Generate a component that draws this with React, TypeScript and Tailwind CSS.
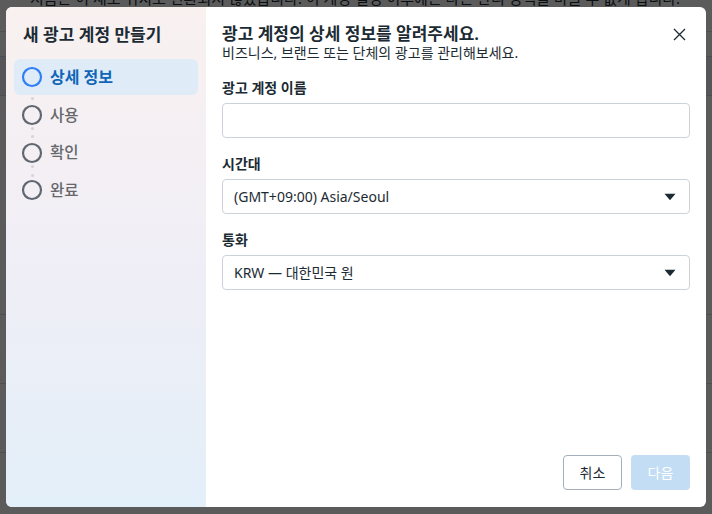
import React from 'react';

const font = { fontFamily: '"Noto Sans", "Noto Sans CJK KR", sans-serif' };

const steps = ['상세 정보', '사용', '확인', '완료'];

const Circle: React.FC<{ active?: boolean }> = ({ active }) => (
    <svg width="22" height="22" viewBox="0 0 22 22" className="shrink-0">
        <circle cx="11" cy="11" r="9" fill="none" stroke={active ? '#2e7ff7' : '#606770'} strokeWidth="2.2" />
    </svg>
);

const Caret = () => (
    <svg width="12" height="8" viewBox="0 0 12 8">
        <path d="M0.5 0.8 L11.5 0.8 L6 7.2 Z" fill="#1c2b33" />
    </svg>
);

const App: React.FC = () => {
    return (
        <div className="relative w-[712px] h-[514px] overflow-hidden bg-white" style={font}>
            {/* page behind the dialog */}
            <div className="flex flex-col">
                <div className="mt-[-10px] pl-[30px] text-[15px] leading-[16px] text-[#1c2b33] whitespace-nowrap">
                    지금은 이 새로 위치로 전환되지 않았습니다. 이 계정 설정 이후에는 다른 관리 정책을 바꿀 수 없게 됩니다.
                </div>
                <div className="h-[26px] border-b border-[#dadde1]" />
                <div className="h-[25px] border-b border-[#dadde1]" />
                <div className="h-[16px] bg-[#f0f2f5]" />
                <div className="h-[23px] border-b border-[#dadde1] bg-[#f0f2f5]" />
                <div className="h-[219px] border-b border-[#dadde1]" />
                <div className="h-[69px] border-b border-[#dadde1]" />
                <div className="h-[69px] border-b border-[#dadde1]" />
            </div>
            <div className="absolute inset-0 bg-black/[0.645]" />

            {/* dialog */}
            <div className="absolute left-[6px] top-[7px] w-[700px] h-[500px] flex rounded-md overflow-hidden bg-white">
                <div className="w-[200px] shrink-0 bg-gradient-to-b from-[#f9f1f0] via-[#f0eef6] to-[#e3eff9] px-2 pt-[17px] relative">
                    <div className="pl-[9px] text-[17px] font-semibold text-[#1c2b33] h-[22px] leading-[22px]">새 광고 계정 만들기</div>
                    <div className="absolute left-[25px] top-[90px] w-[3px] h-[3px] rounded-full bg-[#d5d4d8]" />
                    <div className="absolute left-[25px] top-[120px] w-[3px] h-[3px] rounded-full bg-[#d5d4d8]" />
                    <div className="absolute left-[25px] top-[128px] w-[3px] h-[3px] rounded-full bg-[#d5d4d8]" />
                    <div className="absolute left-[25px] top-[158px] w-[3px] h-[3px] rounded-full bg-[#d5d4d8]" />
                    <div className="absolute left-[25px] top-[167px] w-[3px] h-[3px] rounded-full bg-[#d5d4d8]" />
                    <div className="mt-[13px] flex flex-col">
                        {steps.map((s, i) => (
                            <div
                                key={s}
                                className={
                                    i === 0
                                        ? 'relative h-[36px] mb-[1.5px] flex items-center gap-[7px] pl-[7px] rounded-md bg-[#dfecf7]'
                                        : 'relative h-[37.5px] flex items-center gap-[7px] pl-[7px]'
                                }
                            >
                                <Circle active={i === 0} />
                                <span
                                    className={
                                        i === 0
                                            ? 'text-[16px] font-semibold text-[#0f65b8]'
                                            : 'text-[15.5px] font-medium text-[#65676b]'
                                    }
                                >
                                    {s}
                                </span>
                            </div>
                        ))}
                    </div>
                </div>

                <div className="flex-1 flex flex-col px-4 pt-[17px] pb-[17px]">
                    <div className="flex items-start justify-between">
                        <div>
                            <div className="text-[17px] font-semibold text-[#1c2b33] leading-[20px]">광고 계정의 상세 정보를 알려주세요.</div>
                            <div className="text-[14px] text-[#1c2b33] leading-[18px]">비즈니스, 브랜드 또는 단체의 광고를 관리해보세요.</div>
                        </div>
                        <svg width="13" height="13" viewBox="0 0 13 13" className="mt-[4px] mr-[4px]">
                            <path d="M1 1 L12 12 M12 1 L1 12" stroke="#1c2b33" strokeWidth="1.3" />
                        </svg>
                    </div>

                    <div className="mt-[16px] text-[14px] font-bold text-[#1c2b33] leading-[20px]">광고 계정 이름</div>
                    <div className="mt-[5px] h-[35px] rounded-[4px] border border-[#cbd2d9]" />

                    <div className="mt-[16px] text-[14px] font-bold text-[#1c2b33] leading-[20px]">시간대</div>
                    <div className="mt-[5px] h-[35px] rounded-[4px] border border-[#cbd2d9] flex items-center justify-between pl-[11px] pr-[13px]">
                        <span className="text-[14px] text-[#1c2b33]">(GMT+09:00) Asia/Seoul</span>
                        <Caret />
                    </div>

                    <div className="mt-[16px] text-[14px] font-bold text-[#1c2b33] leading-[20px]">통화</div>
                    <div className="mt-[5px] h-[35px] rounded-[4px] border border-[#cbd2d9] flex items-center justify-between pl-[11px] pr-[13px]">
                        <span className="text-[14px] text-[#1c2b33]">KRW — 대한민국 원</span>
                        <Caret />
                    </div>

                    <div className="mt-auto flex justify-end gap-[9px]">
                        <button className="w-[59px] h-[35px] rounded-[4px] border border-[#a4afbc] bg-white text-[14px] text-[#1c2b33]">취소</button>
                        <button className="w-[59px] h-[35px] rounded-[4px] bg-[#c3ddf4] text-[14px] text-white">다음</button>
                    </div>
                </div>
            </div>
        </div>
    );
};

export default App;
